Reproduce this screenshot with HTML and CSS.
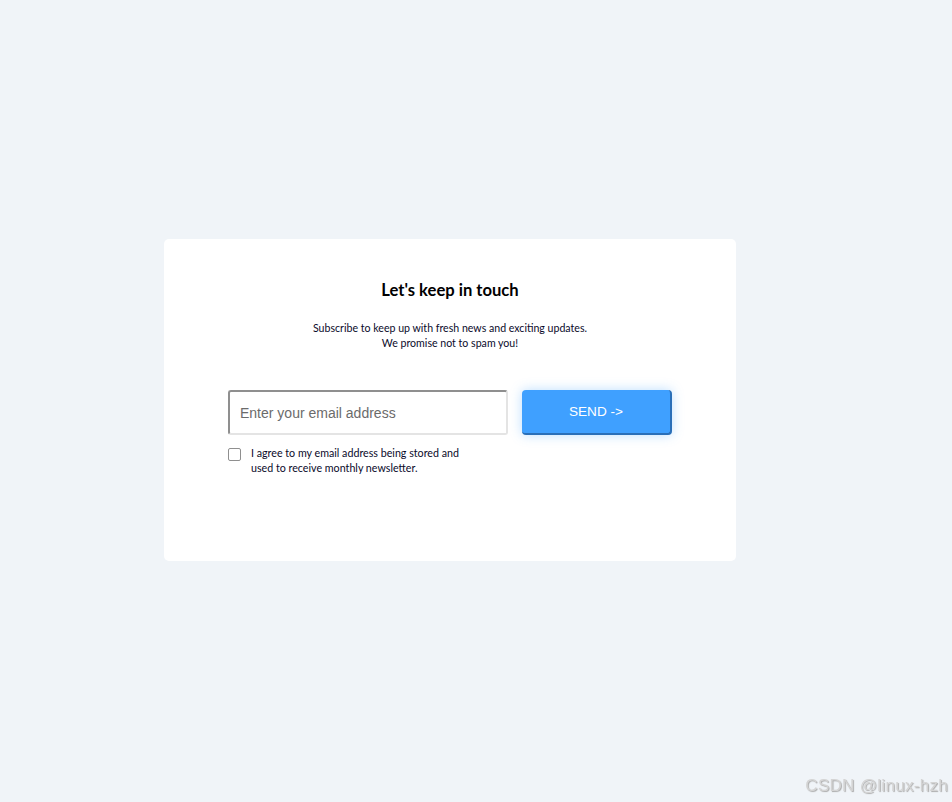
FILE: index.html
```html
<!DOCTYPE html>
<html>
<head>
<meta charset="utf-8">
<link rel="stylesheet" href="styles.css">
</head>
<body>
<div class="page">
  <div class="card">
    <h2 class="title">Let's keep in touch</h2>
    <p class="sub">Subscribe to keep up with fresh news and exciting updates.<br>We promise not to spam you!</p>
    <div class="form">
      <div class="field">
        <input class="email" type="text" placeholder="Enter your email address">
        <label class="agree">
          <span class="box"></span>
          <span class="agree-text">I agree to my email address being stored and<br>used to receive monthly newsletter.</span>
        </label>
      </div>
      <button class="send">SEND -&gt;</button>
    </div>
  </div>
</div>
<div class="mark">CSDN @linux-hzh</div>
</body>
</html>
```
FILE: styles.css
```css
html, body {
  margin: 0;
  padding: 0;
  background: #f0f4f8;
  height: 100%;
}
.page {
  padding-top: 239px;
  padding-left: 164px;
}
.card {
  width: 572px;
  height: 322px;
  box-sizing: border-box;
  background: #fff;
  border-radius: 5px;
  padding: 38px 64px 0;
  font-family: Lato, "Source Sans Pro", sans-serif;
  color: #000;
}
.title {
  margin: 0;
  text-align: center;
  font-size: 16.6px;
  line-height: 26px;
  font-weight: 700;
}
.sub {
  margin: 18px 0 0;
  text-align: center;
  font-size: 10.6px;
  line-height: 15px;
  color: #0a0a2a;
}
.form {
  margin-top: 39px;
  display: flex;
  gap: 14px;
  align-items: flex-start;
}
.field {
  width: 280px;
}
.email {
  display: block;
  width: 280px;
  height: 45px;
  box-sizing: border-box;
  border: 2px solid #e4e4e4;
  border-top-color: #8f8f8f;
  border-left-color: #8f8f8f;
  border-radius: 3px;
  padding: 0 10px;
  font-family: "Liberation Sans", Arial, sans-serif;
  font-size: 14px;
  outline: none;
}
.email::placeholder {
  color: #6b6b6b;
}
.agree {
  display: flex;
  gap: 10px;
  margin-top: 10px;
  font-size: 10.7px;
  line-height: 15px;
}
.box {
  flex: none;
  width: 13px;
  height: 13px;
  box-sizing: border-box;
  border: 1px solid #8f8f8f;
  border-radius: 2px;
  margin-top: 3px;
}
.agree-text {
  color: #0a0a2a;
}
.send {
  width: 150px;
  height: 45px;
  box-sizing: border-box;
  background: #3fa0ff;
  color: #fff;
  border: none;
  border-right: 2px solid #2a6fb8;
  border-bottom: 2px solid #2a6fb8;
  border-radius: 4px;
  font-family: "Liberation Sans", Arial, sans-serif;
  font-size: 13.6px;
  box-shadow: 0 0 12px rgba(63, 160, 255, 0.35);
  padding: 0;
}
.mark {
  position: fixed;
  right: 4px;
  bottom: 6px;
  font-family: "Liberation Sans", Arial, sans-serif;
  font-size: 17px;
  color: #d4d4d4;
  text-shadow: 1px 1px 1px #aaa;
  letter-spacing: 0.3px;
}
```
